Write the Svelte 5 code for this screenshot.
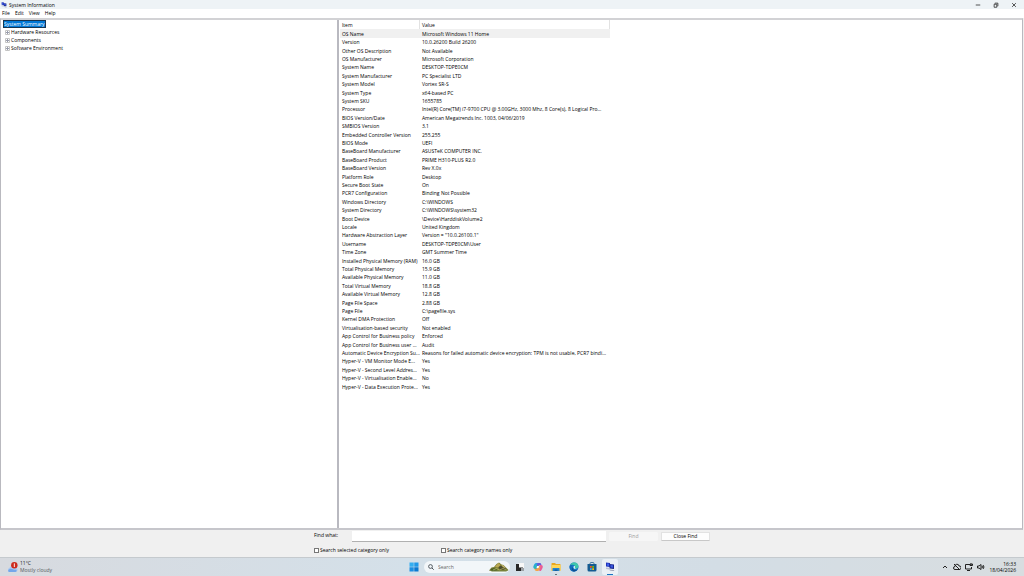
<script lang="ts">
    type Row = { item: string; value: string };

    const menus = ["File", "Edit", "View", "Help"];
    const categories = ["Hardware Resources", "Components", "Software Environment"];

    const rows: Row[] = [
        { item: "OS Name", value: "Microsoft Windows 11 Home" },
        { item: "Version", value: "10.0.26200 Build 26200" },
        { item: "Other OS Description", value: "Not Available" },
        { item: "OS Manufacturer", value: "Microsoft Corporation" },
        { item: "System Name", value: "DESKTOP-TDPE0CM" },
        { item: "System Manufacturer", value: "PC Specialist LTD" },
        { item: "System Model", value: "Vortex SR-S" },
        { item: "System Type", value: "x64-based PC" },
        { item: "System SKU", value: "1655785" },
        { item: "Processor", value: "Intel(R) Core(TM) i7-9700 CPU @ 3.00GHz, 3000 Mhz, 8 Core(s), 8 Logical Pro..." },
        { item: "BIOS Version/Date", value: "American Megatrends Inc. 1003, 04/06/2019" },
        { item: "SMBIOS Version", value: "3.1" },
        { item: "Embedded Controller Version", value: "255.255" },
        { item: "BIOS Mode", value: "UEFI" },
        { item: "BaseBoard Manufacturer", value: "ASUSTeK COMPUTER INC." },
        { item: "BaseBoard Product", value: "PRIME H310-PLUS R2.0" },
        { item: "BaseBoard Version", value: "Rev X.0x" },
        { item: "Platform Role", value: "Desktop" },
        { item: "Secure Boot State", value: "On" },
        { item: "PCR7 Configuration", value: "Binding Not Possible" },
        { item: "Windows Directory", value: "C:\\WINDOWS" },
        { item: "System Directory", value: "C:\\WINDOWS\\system32" },
        { item: "Boot Device", value: "\\Device\\HarddiskVolume2" },
        { item: "Locale", value: "United Kingdom" },
        { item: "Hardware Abstraction Layer", value: 'Version = "10.0.26100.1"' },
        { item: "Username", value: "DESKTOP-TDPE0CM\\User" },
        { item: "Time Zone", value: "GMT Summer Time" },
        { item: "Installed Physical Memory (RAM)", value: "16.0 GB" },
        { item: "Total Physical Memory", value: "15.9 GB" },
        { item: "Available Physical Memory", value: "11.0 GB" },
        { item: "Total Virtual Memory", value: "18.8 GB" },
        { item: "Available Virtual Memory", value: "12.8 GB" },
        { item: "Page File Space", value: "2.88 GB" },
        { item: "Page File", value: "C:\\pagefile.sys" },
        { item: "Kernel DMA Protection", value: "Off" },
        { item: "Virtualisation-based security", value: "Not enabled" },
        { item: "App Control for Business policy", value: "Enforced" },
        { item: "App Control for Business user ...", value: "Audit" },
        { item: "Automatic Device Encryption Su...", value: "Reasons for failed automatic device encryption: TPM is not usable, PCR7 bindi..." },
        { item: "Hyper-V - VM Monitor Mode E...", value: "Yes" },
        { item: "Hyper-V - Second Level Addres...", value: "Yes" },
        { item: "Hyper-V - Virtualisation Enable...", value: "No" },
        { item: "Hyper-V - Data Execution Prote...", value: "Yes" },
    ];

    let selected = $state(0);
    let query = $state("");
</script>

{#snippet computers()}
    <svg class="computers" viewBox="0 0 20 20" aria-hidden="true">
        <path d="M2 1l8 1v8l-8-1z" fill="#2334b8" />
        <path d="M4 3l4 .6v4.500L4 7.500z" fill="#3d62ee" />
        <path d="M2 11l7 1-1 3-6-1z" fill="#b9bfd4" />
        <path d="M9 4l9 1v9l-9-1z" fill="#18268f" />
        <path d="M11 6l5 .7v5L11 11z" fill="#3b59e0" />
        <path d="M8 15l9 1 2 2-9-1z" fill="#8e94ab" />
    </svg>
{/snippet}

<div class="screen">
    <header class="titlebar">
        {@render computers()}
        <h1>System Information</h1>
        <div class="window-buttons">
            <button aria-label="Minimise">
                <svg viewBox="0 0 8 8"><path d="M1 4h6" /></svg>
            </button>
            <button aria-label="Restore">
                <svg viewBox="0 0 8 8"><path d="M2.5 2V1.5H6.5V5.5H6M1.5 3H5v4H1.5z" /></svg>
            </button>
            <button aria-label="Close">
                <svg viewBox="0 0 8 8"><path d="M1.5 1.5l5 5M6.5 1.5l-5 5" /></svg>
            </button>
        </div>
    </header>

    <nav class="menubar">
        {#each menus as menu}
            <button>{menu}</button>
        {/each}
    </nav>

    <main class="panes">
        <ul class="tree">
            <li><button class="root">System Summary</button></li>
            {#each categories as category}
                <li>
                    <button class="branch">
                        <svg viewBox="0 0 5 5" aria-hidden="true">
                            <path d="M.5.5h4v4h-4z" fill="#fff" stroke="#c4c4c4" />
                            <path d="M1 2.5h3M2.5 1v3" stroke="#9a9dac" />
                        </svg>
                        {category}
                    </button>
                </li>
            {/each}
        </ul>

        <div class="details">
            <table>
                <thead>
                    <tr><th>Item</th><th>Value</th></tr>
                </thead>
                <tbody>
                    {#each rows as row, i}
                        <tr class:selected={selected === i} onclick={() => (selected = i)}>
                            <td>{row.item}</td>
                            <td>{row.value}</td>
                        </tr>
                    {/each}
                </tbody>
            </table>
        </div>
    </main>

    <form class="find" onsubmit={(e) => e.preventDefault()}>
        <div class="find-row">
            <label class="find-label" for="find-what">Find what:</label>
            <input id="find-what" class="find-input" type="text" bind:value={query} />
            <button class="push" disabled={!query}>Find</button>
            <button class="push" type="button">Close Find</button>
        </div>
        <div class="find-options">
            <label><input type="checkbox" />Search selected category only</label>
            <label><input type="checkbox" />Search category names only</label>
        </div>
    </form>

    <footer class="taskbar">
        <button class="weather">
            <svg viewBox="0 0 24 24" aria-hidden="true">
                <path d="M5 22a5 5 0 0 1 0-9 7 7 0 0 1 12-1 5 5 0 0 1 2 10z" fill="#a9c9f3" />
                <path d="M4 22a4 4 0 0 1 2-7c5-2 8 3 14 2 2 2 1 5-2 5z" fill="#74a7ea" />
                <circle cx="16" cy="7" r="7" fill="#cd2a1c" />
                <path d="M16 3v8" stroke="#fff" stroke-width="2" />
            </svg>
            <span class="weather-text">
                <span class="degrees">11°C</span>
                <span>Mostly cloudy</span>
            </span>
        </button>

        <div class="apps">
            <button class="app" aria-label="Start">
                <svg viewBox="0 0 20 20">
                    <path d="M1 1h8.5v8.5H1z" fill="#35aef0" />
                    <path d="M10.5 1H19v8.5h-8.5z" fill="#2199e8" />
                    <path d="M1 10.5h8.5V19H1z" fill="#1c8fe2" />
                    <path d="M10.5 10.5H19V19h-8.5z" fill="#0a78d0" />
                </svg>
            </button>
            <div class="search">
                <svg class="lens" viewBox="0 0 12 12" aria-hidden="true">
                    <circle cx="5" cy="5" r="3.8" fill="none" stroke="#333b42" stroke-width="1.6" />
                    <path d="M8 8l3.4 3.4" stroke="#333b42" stroke-width="1.8" />
                </svg>
                <input type="text" placeholder="Search" aria-label="Search" />
                <svg class="hills" viewBox="0 0 40 20" aria-hidden="true">
                    <path d="M0 17l5-6 5-1 5-6 5-3 5 4 4 1 5 5 5 5-3 2H4z" fill="#7c7f35" />
                    <path d="M12 9l7-7 4 4-3 4-4 1z" fill="#b9a753" />
                    <path d="M3 14l7-2 8 4-4 2H5z" fill="#4c602a" />
                    <path d="M19 10l5-3 4 4 5 1 2 4H22z" fill="#4d4b2c" />
                    <path d="M24 5l5 2 5 6-6-3z" fill="#c8b775" />
                    <path d="M8 16l7-3 6 3 7-3 7 3" stroke="#b5b764" stroke-width="1.5" fill="none" />
                    <path d="M1 17h38l-5 2H6z" fill="#75833f" />
                </svg>
            </div>
            <button class="app" aria-label="Task view">
                <svg viewBox="0 0 20 20">
                    <path d="M7 2h11v12H7z" fill="#f8f8f8" />
                    <path d="M2 4h6v7h8v7H2z" fill="#272727" />
                    <path d="M12 12h6v6h-6z" fill="#9da2a6" />
                </svg>
            </button>
            <button class="app" aria-label="Copilot">
                <svg viewBox="0 0 20 20">
                    <path d="M7 2h6c2 0 3 2 3 4l-5 1-3 7H5c-4 0-5-3-4-6l2-4q1-2 4-2z" fill="#2a9de5" />
                    <path d="M11 2h2c2 0 3 1 4 4h-3c-3 0-4 2-5 5L7 8c1-4 1-6 4-6z" fill="#6a58d8" />
                    <path d="M14 6h2c4 0 4 3 3 6l-2 4c-1 2-2 2-4 2l-2-5z" fill="#e95b98" />
                    <path d="M2 12l5 1c3 0 4-2 5-6l3 2-2 6c-1 3-2 3-5 3H7c-3 0-3-2-5-6z" fill="#f5a348" />
                    <path d="M2 11l1-5 5-1-2 8c-1 2-3 1-4-2z" fill="#2bbdb6" />
                    <path d="M8 8h4l-1 4H7z" fill="#fff" />
                </svg>
            </button>
            <button class="app running" aria-label="File Explorer">
                <svg viewBox="0 0 20 20">
                    <path d="M1 3q0-1 1-1h6l2 2h8q1 0 1 1v12H1z" fill="#e9a820" />
                    <path d="M1 6h18v11q0 1-1 1H2q-1 0-1-1z" fill="#ffd75a" />
                    <path d="M4 12h12q1 0 1 1v5H3v-5q0-1 1-1z" fill="#2583d0" />
                    <path d="M7 15h6v3H7z" fill="#155f9f" />
                </svg>
            </button>
            <button class="app" aria-label="Edge">
                <svg viewBox="0 0 20 20">
                    <circle cx="10" cy="10" r="9" fill="#1479c9" />
                    <path d="M2 7C4 2 8 1 11 1c5 0 8 4 8 8 0 3-3 4-5 4-3 0-3-1-2-3 0-3-3-5-6-4-2 0-3 1-4 1z" fill="#40c6aa" />
                    <path d="M1 10c0-3 3-5 6-4-2 2-3 7 0 10 2 2 5 3 8 1-7 5-14 0-14-7z" fill="#146bba" />
                    <path d="M8 9c-2 3 0 7 4 7 3 0 5-1 6-2-2 3-5 5-8 5-4-1-6-7-2-10z" fill="#0c4d91" />
                    <path d="M10 8c2 0 2 1 2 2-1 2 0 3 3 3l-3 1c-3-1-4-4-2-6z" fill="#e8f5fb" />
                </svg>
            </button>
            <button class="app" aria-label="Microsoft Store">
                <svg viewBox="0 0 20 20">
                    <path d="M6 5V3q0-2 2-2h4q2 0 2 2v2" fill="none" stroke="#28638f" stroke-width="1.6" />
                    <path d="M1 4h18v12q0 3-3 3H4q-3 0-3-3z" fill="#155b91" />
                    <path d="M6 8h3.5v3.5H6z" fill="#f25022" />
                    <path d="M10.5 8H14v3.5h-3.5z" fill="#7fba00" />
                    <path d="M6 12.5h3.5V16H6z" fill="#33adef" />
                    <path d="M10.5 12.5H14V16h-3.5z" fill="#ffb900" />
                </svg>
            </button>
            <button class="app active" aria-label="System Information">
                {@render computers()}
            </button>
        </div>

        <div class="tray">
            <button aria-label="Show hidden icons">
                <svg viewBox="0 0 16 16"><path d="M4 10l4-4 4 4" /></svg>
            </button>
            <button aria-label="OneDrive">
                <svg viewBox="0 0 16 16"><path d="M4 13a3 3 0 0 1 0-6 4 4 0 0 1 8-1 3.5 3.5 0 0 1 1 7zM2 2l12 12" /></svg>
            </button>
            <button aria-label="Network">
                <svg viewBox="0 0 16 16"><path d="M10 3H1v9h12V8M4 15h6M12 1v5M10 2h5v3h-5z" /></svg>
            </button>
            <button aria-label="Volume">
                <svg viewBox="0 0 16 16"><path d="M1 6h3l4-3v10l-4-3H1zM10 6q2 2 0 4M12 4q4 4 0 8" /></svg>
            </button>
            <button class="clock">
                <span>16:33</span>
                <span>18/04/2026</span>
            </button>
        </div>
    </footer>
</div>

<style>
    :global(body) {
        margin: 0;
    }

    .screen {
        min-height: 100vh;
        display: flex;
        flex-direction: column;
        background: #f0f0f0;
        color: #000;
        font-family: "Open Sans", "Noto Sans", sans-serif;
        font-size: 5px;
        line-height: 8px;
    }

    button,
    input {
        margin: 0;
        padding: 0;
        border: none;
        background: none;
        color: inherit;
        font: inherit;
        box-sizing: border-box;
    }

    svg {
        display: block;
        flex: none;
    }

    .titlebar {
        display: flex;
        align-items: center;
        gap: 2px;
        height: 9px;
        padding: 0 1px;
        background: #eef3f6;
    }

    .titlebar .computers {
        width: 6px;
        height: 6px;
    }

    h1 {
        margin: 0;
        font-size: inherit;
        font-weight: 400;
    }

    .window-buttons {
        display: flex;
        margin-left: auto;
    }

    .window-buttons button {
        width: 18px;
        display: flex;
        justify-content: center;
    }

    .window-buttons svg {
        width: 6px;
        height: 6px;
        fill: none;
        stroke: #222;
    }

    .menubar {
        display: flex;
        align-items: flex-start;
        gap: 5px;
        height: 9px;
        padding-left: 2px;
        background: #fff;
    }

    .panes {
        flex: 1;
        display: flex;
        margin-right: 1px;
        border: 1px solid #b9b9bf;
        border-top: 2px solid #d2d2d5;
        border-bottom: 2px solid #c6c6cb;
    }

    .tree {
        width: calc(33% - 1px);
        box-sizing: border-box;
        margin: 0;
        padding: 0 2px;
        list-style: none;
        background: #fff;
    }

    .tree li,
    .tree button {
        display: flex;
        align-items: center;
        height: 8px;
    }

    .tree .root {
        background: #0078d7;
        color: #fff;
        outline: 1px solid #163450;
        outline-offset: -1px;
        padding: 0 1px;
    }

    .branch {
        gap: 1px;
        padding-left: 2px;
    }

    .branch svg {
        width: 5px;
        height: 5px;
    }

    .details {
        flex: 1;
        padding-left: 1px;
        border-left: 2px solid #b9b9c0;
        background: #fff;
    }

    table {
        width: 270px;
        table-layout: fixed;
        border-collapse: collapse;
    }

    th,
    td {
        height: 8px;
        padding: 0 0 0 2px;
        text-align: left;
        font-weight: 400;
        white-space: nowrap;
        overflow: hidden;
    }

    th {
        height: 9px;
        box-shadow: inset -1px 0 #e2e2e2;
    }

    th:first-child {
        width: 78px;
    }

    tbody tr:nth-child(5n + 1) td,
    tbody tr:nth-child(5n + 3) td {
        height: 9px;
    }

    .selected {
        background: #f0f0f0;
    }

    .find {
        width: 396px;
        margin: 0 auto;
        padding: 1px 0 3px;
    }

    .find-row {
        display: flex;
        align-items: center;
        gap: 3px;
    }

    .find-label {
        width: 35px;
        align-self: flex-start;
    }

    .find-input {
        flex: 1;
        height: 11px;
        background: #fff;
        border-bottom: 1px solid #b0b0b0;
    }

    .push {
        width: 49px;
        height: 9px;
        line-height: 7px;
        background: #fdfdfd;
        border: 1px solid #e2e2e2;
        border-bottom-color: #c8c8c8;
        border-radius: 1px;
    }

    .push:disabled {
        background: #f6f6f6;
        border-color: #f6f6f6;
        color: #999;
    }

    .find-options {
        display: grid;
        grid-template-columns: 127px 1fr;
        padding-top: 4px;
    }

    .find-options label {
        display: flex;
        align-items: center;
        gap: 1px;
    }

    .find-options input {
        appearance: none;
        width: 5px;
        height: 5px;
        border: 1px solid #777;
        background: #fff;
    }

    .find-options input:checked {
        background: #0067c0;
    }

    .taskbar {
        display: grid;
        grid-template-columns: 1fr auto 1fr;
        align-items: center;
        height: 18px;
        border-top: 1px solid #c5cace;
        background: linear-gradient(90deg, #d7dadf, #d4e0e9 40%, #d3dde5 70%, #d8dde0);
    }

    .weather {
        display: flex;
        align-items: center;
        gap: 2px;
        padding-left: 7px;
        text-align: left;
        color: #55595e;
    }

    .weather svg {
        width: 11px;
        height: 11px;
    }

    .weather-text {
        display: flex;
        flex-direction: column;
        line-height: 7px;
    }

    .degrees {
        color: #1c1f23;
    }

    .apps {
        display: flex;
        align-items: center;
        gap: 2px;
    }

    .app {
        position: relative;
        width: 16px;
        height: 16px;
        display: flex;
        align-items: center;
        justify-content: center;
        border-radius: 2px;
    }

    .app svg {
        width: 10px;
        height: 10px;
    }

    .running::after,
    .active::after {
        content: "";
        position: absolute;
        bottom: 0;
        width: 2px;
        height: 1px;
        background: #6d747a;
    }

    .active {
        background: #eaf0f5;
    }

    .active::after {
        width: 6px;
        background: #1a74c4;
    }

    .search {
        display: flex;
        align-items: center;
        gap: 4px;
        box-sizing: border-box;
        width: 86px;
        height: 12px;
        padding: 0 1px 0 4px;
        border-radius: 6px;
        background: #f2f6f9;
    }

    .lens {
        width: 6px;
        height: 6px;
    }

    .search input {
        flex: 1;
        min-width: 0;
    }

    .search input::placeholder {
        color: #666;
        opacity: 1;
    }

    .hills {
        width: 20px;
        height: 10px;
    }

    .tray {
        display: flex;
        align-items: center;
        justify-content: flex-end;
        gap: 4px;
        padding-right: 8px;
    }

    .tray svg {
        width: 8px;
        height: 8px;
        fill: none;
        stroke: #222;
        stroke-width: 2;
    }

    .clock {
        display: flex;
        flex-direction: column;
        align-items: flex-end;
        line-height: 6px;
    }
</style>
